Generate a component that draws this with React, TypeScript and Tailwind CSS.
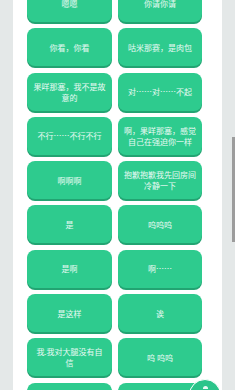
import React from "react";

const items: string[] = [
  "嗯嗯",
  "你请你请",
  "你看，你看",
  "咕米那赛，是肉包",
  "果咩那塞，我不是故意的",
  "对……对……不起",
  "不行……不行不行",
  "啊，果咩那塞，感觉自己在强迫你一样",
  "啊啊啊",
  "抱歉抱歉我先回房间冷静一下",
  "是",
  "呜呜呜",
  "是啊",
  "啊……",
  "是这样",
  "诶",
  "我.我对大腿没有自信",
  "呜 呜呜",
  "",
  "",
];

export default function App() {
  return (
    <div
      className="relative w-[235px] h-[390px] overflow-hidden bg-[#e4e8e8] flex"
      style={{ fontFamily: '"Noto Sans CJK SC", "Noto Sans", sans-serif' }}
    >
      <div className="ml-[13px] w-[209px] h-full bg-white">
        <div className="mt-[-16px] pl-[14px] grid grid-cols-[85px_84px] gap-x-[6px] gap-y-[6.3px]">
          {items.map((t, i) => (
            <div
              key={i}
              className="h-[38px] rounded-[8px] bg-[#2ecb8e] shadow-[0_2px_0_#22a472] flex items-center justify-center px-[6px] text-center text-[8px] leading-[11px] text-white/90"
            >
              {t}
            </div>
          ))}
        </div>
      </div>
      <div className="absolute right-0 top-[137px] w-[3px] h-[105px] bg-[#9c9c9c]" />
      <div className="absolute left-[189px] top-[379px] w-[32px] h-[32px] rounded-full bg-[#2bc48a] border border-white flex items-start justify-center pt-[6px]">
        <div className="w-[5px] h-[3px] rounded-t-full bg-white/90" />
      </div>
    </div>
  );
}
